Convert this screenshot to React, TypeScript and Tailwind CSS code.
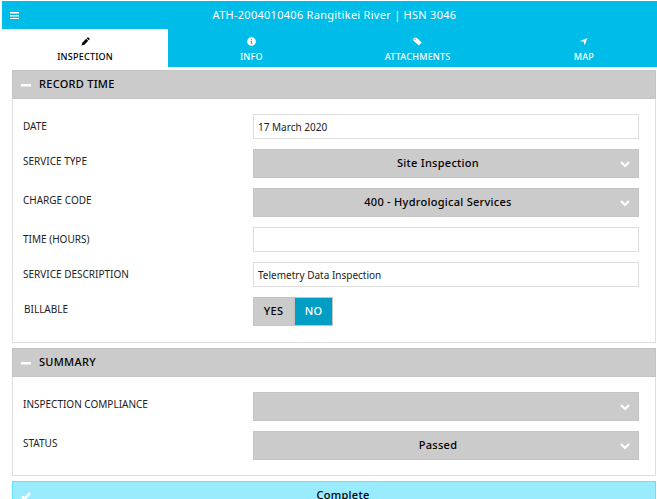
import { useState, type ReactNode } from 'react';
import { FaInfoCircle } from 'react-icons/fa';

function PencilIcon({ className }: { className?: string }) {
  return (
    <svg viewBox="0 0 20 20" className={className} fill="currentColor" aria-hidden="true">
      <path d="M1 19l2-6.500 8.500-8.500 4.500 4.500-8.500 8.500zM12.800 2.800l1.600-1.600q1-1 2.200 0l2.200 2.200q1 1.200 0 2.200l-1.600 1.600z" />
    </svg>
  );
}

function TagIcon({ className }: { className?: string }) {
  return (
    <svg viewBox="0 0 20 20" className={className} fill="currentColor" fillRule="evenodd" aria-hidden="true">
      <path d="M1 3q0-1.500 1.500-1.500h5.500L19.500 12l-6.500 7L1 8.500zM4.500 3.500a1.500 1.500 0 100 3 1.500 1.500 0 000-3z" />
    </svg>
  );
}

function ArrowIcon({ className }: { className?: string }) {
  return (
    <svg viewBox="0 0 20 20" className={className} fill="currentColor" aria-hidden="true">
      <path d="M19 2L12.500 18.500l-2-8.500L1.500 9.500z" />
    </svg>
  );
}

const tabs = [
  { name: 'Inspection', icon: PencilIcon },
  { name: 'Info', icon: FaInfoCircle },
  { name: 'Attachments', icon: TagIcon },
  { name: 'Map', icon: ArrowIcon },
];

function MenuIcon() {
  return (
    <svg viewBox="0 0 9 7" className="h-[7px] w-[9px]" fill="currentColor" aria-hidden="true">
      <path d="M0 0h9v1H0zM0 3h9v1H0zM0 6h9v1H0z" />
      <path d="M0 1h9v1H0zM0 4h9v1H0z" opacity="0.5" />
    </svg>
  );
}

function MinusIcon() {
  return (
    <svg viewBox="0 0 10 10" className="size-[10px] text-white" fill="currentColor" aria-hidden="true">
      <rect y="4" width="10" height="2.500" rx="0.5" />
    </svg>
  );
}

function ChevronIcon() {
  return (
    <svg
      viewBox="0 0 10 10"
      className="pointer-events-none absolute top-[10px] right-[9px] size-[10px] text-white"
      fill="none"
      stroke="currentColor"
      strokeWidth="2.2"
      aria-hidden="true"
    >
      <path d="M1 3l4 4 4-4" />
    </svg>
  );
}

function CheckIcon() {
  return (
    <svg viewBox="0 0 10 10" className="size-[10px] text-white" fill="none" stroke="currentColor" strokeWidth="2.600" aria-hidden="true">
      <path d="M1 5.500l2.500 2.500L9 2" />
    </svg>
  );
}

function Panel({ title, children }: { title: string; children: ReactNode }) {
  const [open, setOpen] = useState(true);
  return (
    <section className="mb-[5px]">
      <h2>
        <button
          type="button"
          aria-expanded={open}
          onClick={() => setOpen(!open)}
          className="flex h-[29px] w-full items-center gap-2 border border-[#c4c4c4] bg-[#cbcbcb] pl-2 text-[11px] font-medium uppercase tracking-wide"
        >
          <MinusIcon />
          {title}
        </button>
      </h2>
      {open && (
        <div className="flex flex-col gap-[10px] border border-t-0 border-[#dedede] py-[15px] pr-4 pl-[10px]">{children}</div>
      )}
    </section>
  );
}

function Row({ id, label, children }: { id: string; label: string; children: ReactNode }) {
  return (
    <div className="flex items-start">
      <label htmlFor={id} className="w-[230px] shrink-0 text-[10px] leading-6 text-[#222]">
        {label}
      </label>
      {children}
    </div>
  );
}

function TextField({ id, label, value = '' }: { id: string; label: string; value?: string }) {
  return (
    <Row id={id} label={label}>
      <input
        id={id}
        type="text"
        defaultValue={value}
        className="h-[25px] min-w-0 flex-1 border border-[#dedede] bg-white px-1 text-[10px] text-[#222]"
      />
    </Row>
  );
}

function SelectField({ id, label, value }: { id: string; label: string; value: string }) {
  return (
    <Row id={id} label={label}>
      <div className="relative min-w-0 flex-1">
        <select
          id={id}
          className="block h-[29px] w-full appearance-none border border-[#c4c4c4] bg-[#cbcbcb] pr-4 text-center text-[11px] font-medium tracking-wide text-black [text-align-last:center]"
        >
          <option>{value}</option>
        </select>
        <ChevronIcon />
      </div>
    </Row>
  );
}

export default function App() {
  const [billable, setBillable] = useState(false);
  return (
    <div className="overflow-hidden bg-white pt-px pl-[2px] font-['Noto_Sans','Open_Sans',sans-serif] text-black">
      <header className="-mr-[10px] bg-[#00bce9] text-white">
        <div className="flex h-7 items-center">
          <button type="button" aria-label="Menu" className="w-8 pl-2">
            <MenuIcon />
          </button>
          <h1 className="flex-1 pr-8 text-center text-[11px] tracking-wide">ATH-2004010406 Rangitikei River | HSN 3046</h1>
        </div>
        <nav className="grid grid-cols-4">
          {tabs.map(({ name, icon: Icon }, i) => (
            <a
              key={name}
              href="#"
              aria-current={i === 0 ? 'page' : undefined}
              className={`flex h-[38px] flex-col items-center gap-1 pt-2 text-[9px] leading-[14px] font-medium uppercase tracking-wide ${i === 0 ? 'bg-white text-black' : ''}`}
            >
              <Icon className="size-[9px] shrink-0" />
              {name}
            </a>
          ))}
        </nav>
      </header>
      <main className="mt-[3px] mr-px ml-[10px]">
        <Panel title="Record Time">
          <TextField id="date" label="DATE" value="17 March 2020" />
          <SelectField id="service-type" label="SERVICE TYPE" value="Site Inspection" />
          <SelectField id="charge-code" label="CHARGE CODE" value="400 - Hydrological Services" />
          <TextField id="time" label="TIME (HOURS)" />
          <TextField id="description" label="SERVICE DESCRIPTION" value="Telemetry Data Inspection" />
          <div role="group" aria-labelledby="billable" className="flex h-[30px] items-start">
            <span id="billable" className="w-[230px] shrink-0 pl-px text-[10px] leading-6 text-[#222]">
              BILLABLE
            </span>
            <button
              type="button"
              aria-pressed={billable}
              onClick={() => setBillable(true)}
              className="h-[29px] w-[41px] border border-[#c4c4c4] bg-[#cbcbcb] text-[11px] font-medium tracking-wide"
            >
              YES
            </button>
            <button
              type="button"
              aria-pressed={!billable}
              onClick={() => setBillable(false)}
              className="h-[29px] w-[39px] border border-[#c4c4c4] bg-[#009dc4] text-[11px] font-medium tracking-wide text-white"
            >
              NO
            </button>
          </div>
        </Panel>
        <Panel title="Summary">
          <SelectField id="compliance" label="INSPECTION COMPLIANCE" value="" />
          <SelectField id="status" label="STATUS" value="Passed" />
        </Panel>
        <button
          type="button"
          className="flex h-[29px] w-full items-center border border-[#5de3fb] bg-[#99ebff] pl-2 text-[11px] font-medium tracking-wide"
        >
          <CheckIcon />
          <span className="flex-1">Complete</span>
        </button>
      </main>
    </div>
  );
}
